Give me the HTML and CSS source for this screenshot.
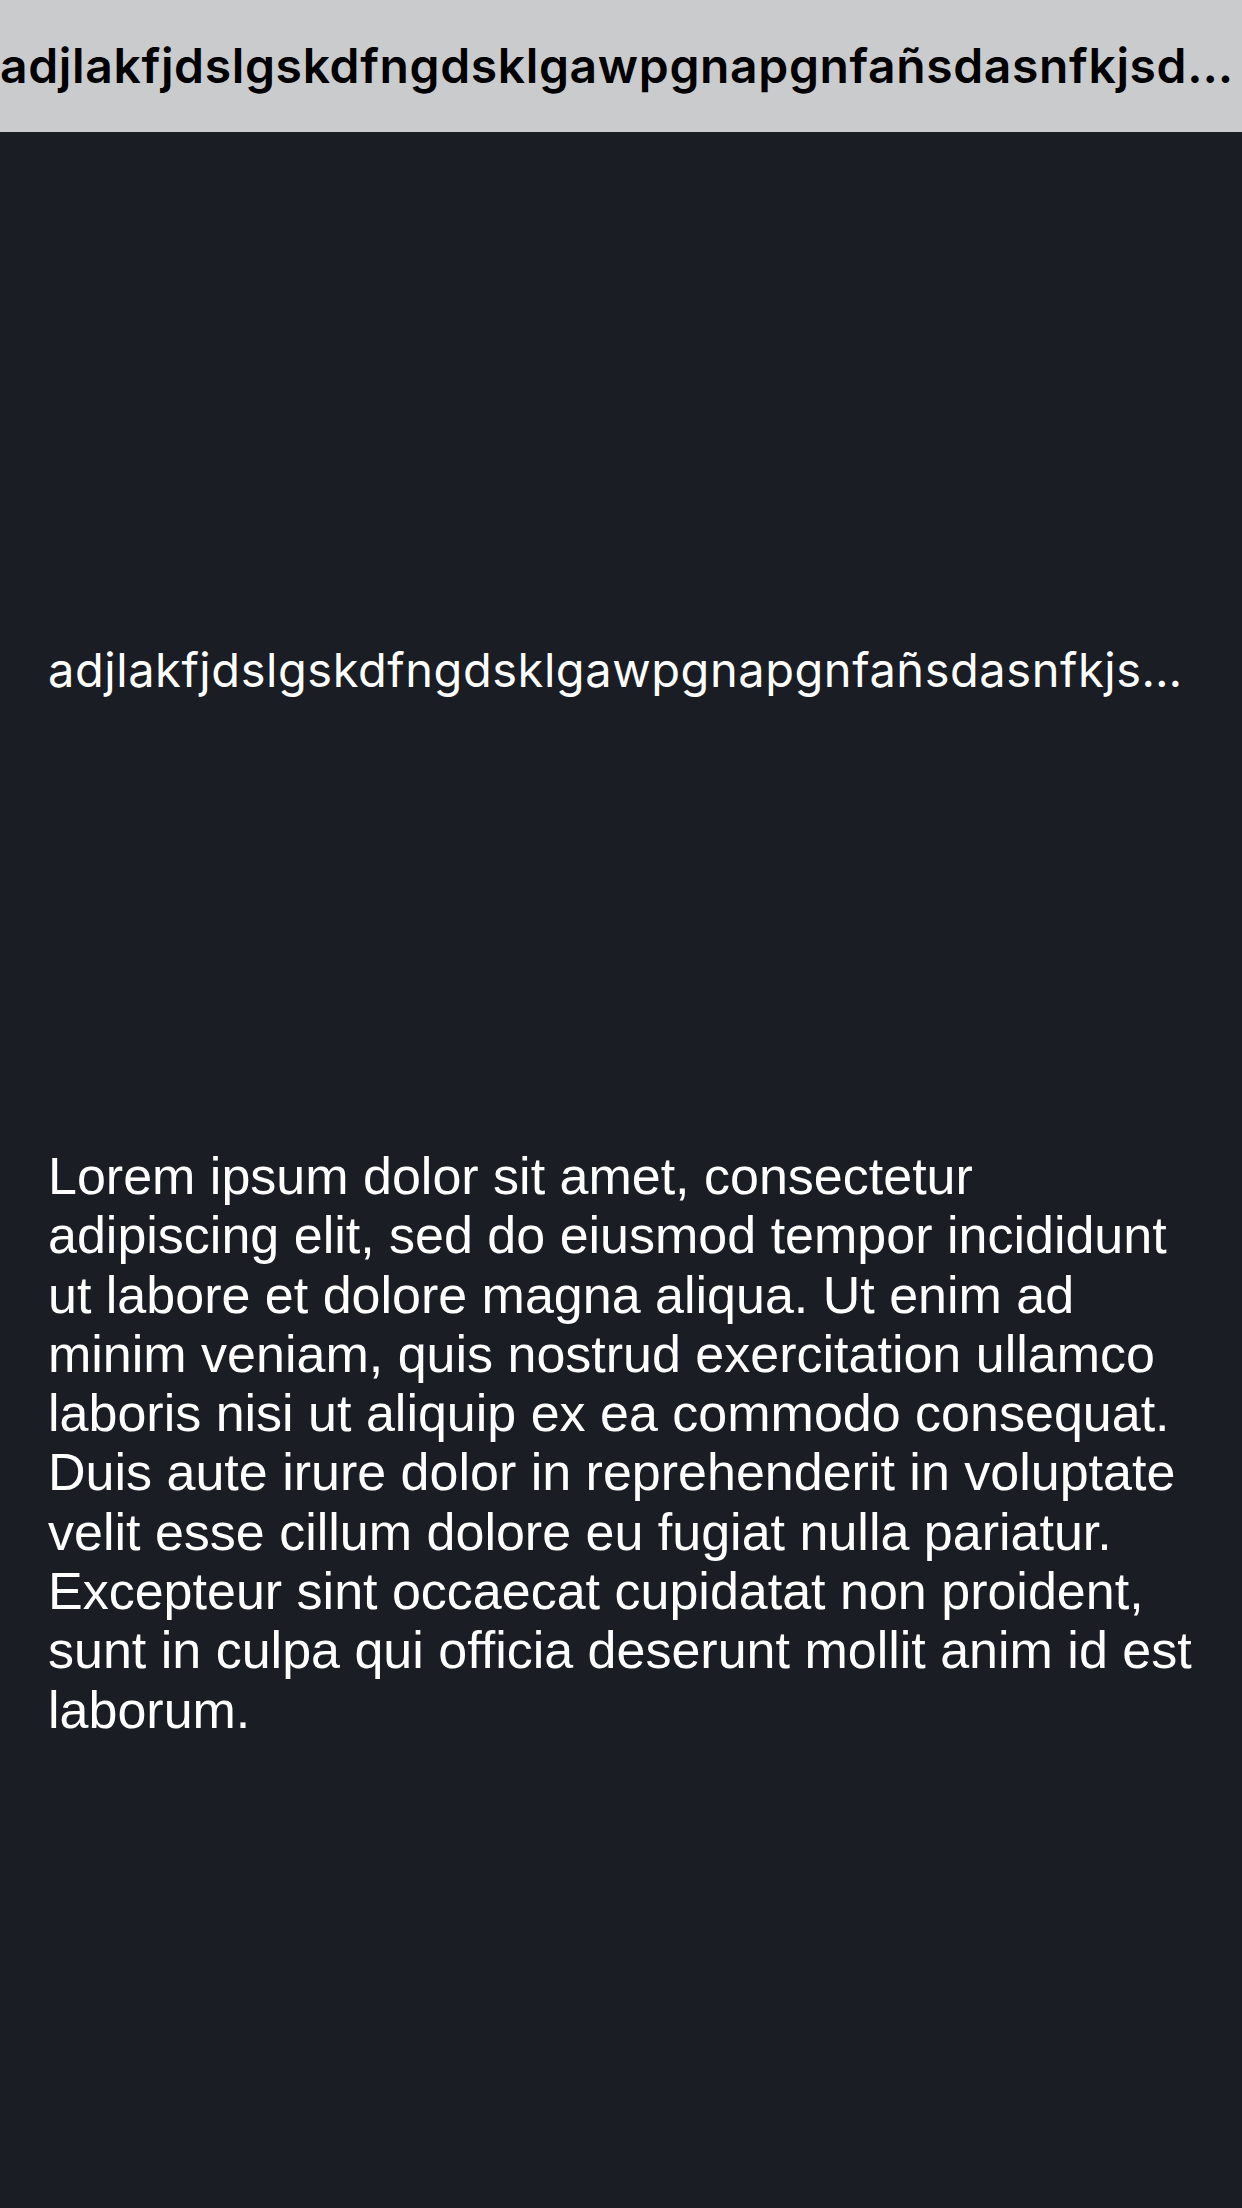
FILE: index.html
```html
<!DOCTYPE html>
<html>
<head>
<meta charset="utf-8">
<link rel="stylesheet" href="styles.css">
</head>
<body>
<header class="navbar">
  <div class="nav-title">adjlakfjdslgskdfngdsklgawpgnapgnfañsdasnfkjsdnfkjsdnfkajsdnfkjasndfkjasndf</div>
</header>
<main class="content">
  <div class="subtitle">adjlakfjdslgskdfngdsklgawpgnapgnfañsdasnfkjsdnfkjsdnfkajsdnfkjasndfkjasndf</div>
  <p class="body-text">Lorem ipsum dolor sit amet, consectetur adipiscing elit, sed do eiusmod tempor incididunt ut labore et dolore magna aliqua. Ut enim ad minim veniam, quis nostrud exercitation ullamco laboris nisi ut aliquip ex ea commodo consequat. Duis aute irure dolor in reprehenderit in voluptate velit esse cillum dolore eu fugiat nulla pariatur. Excepteur sint occaecat cupidatat non proident, sunt in culpa qui officia deserunt mollit anim id est laborum.</p>
</main>
</body>
</html>
```
FILE: styles.css
```css
html, body {
  margin: 0;
  padding: 0;
}
body {
  width: 1242px;
  height: 2208px;
  background: #1b1d24;
  overflow: hidden;
  font-family: Inter, "Noto Sans", sans-serif;
}
.navbar {
  height: 132px;
  background: #cacbcd;
  display: flex;
  align-items: center;
}
.nav-title {
  width: 100%;
  font-size: 48px;
  font-weight: 600;
  letter-spacing: 0.65px;
  line-height: 62px;
  color: #000;
  white-space: nowrap;
  overflow: hidden;
  text-overflow: ellipsis;
}
.content {
  padding: 507px 48px 0 48px;
}
.subtitle {
  font-size: 47px;
  letter-spacing: 0.55px;
  line-height: 61px;
  font-weight: 400;
  color: #fff;
  white-space: nowrap;
  overflow: hidden;
  text-overflow: ellipsis;
}
.body-text {
  margin: 447px 0 0 0;
  font-family: "Liberation Sans", Arial, sans-serif;
  font-size: 52px;
  line-height: 59.3px;
  color: #fff;
}
```
